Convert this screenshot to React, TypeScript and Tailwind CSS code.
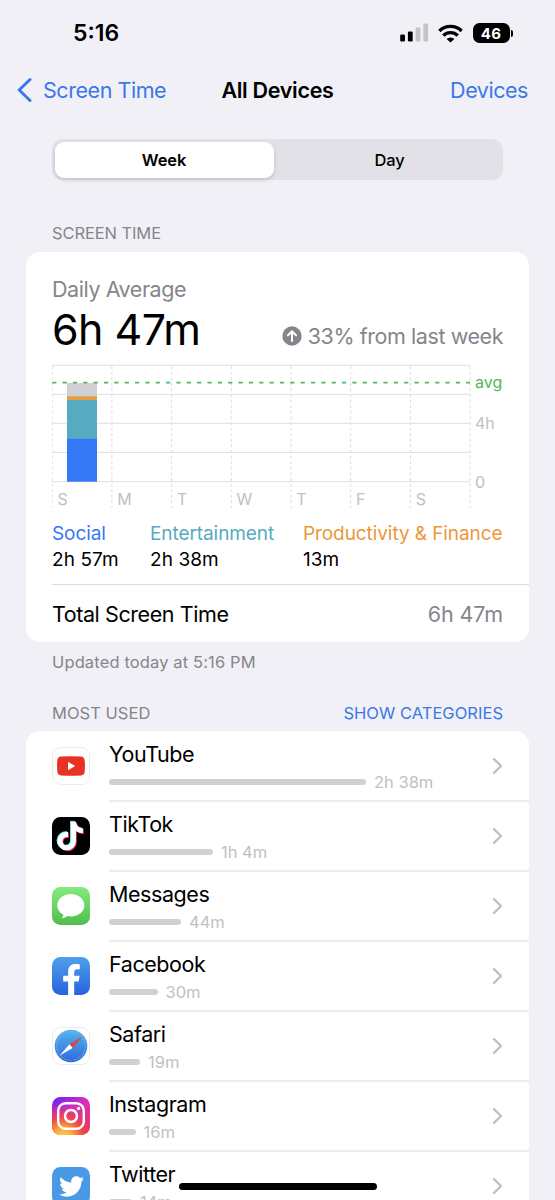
import type { ReactNode } from "react";
import { FaFacebookF, FaTiktok, FaTwitter } from "react-icons/fa";

interface AppUsage {
  name: string;
  time: string;
  barWidth: number;
  icon: ReactNode;
}

const days = ["S", "M", "T", "W", "T", "F", "S"];
const COL = 59.7;

const apps: AppUsage[] = [
  { name: "YouTube", time: "2h 38m", barWidth: 257, icon: <YouTubeIcon /> },
  { name: "TikTok", time: "1h 4m", barWidth: 104, icon: <TikTokIcon /> },
  { name: "Messages", time: "44m", barWidth: 72, icon: <MessagesIcon /> },
  { name: "Facebook", time: "30m", barWidth: 48.5, icon: <FacebookIcon /> },
  { name: "Safari", time: "19m", barWidth: 31, icon: <SafariIcon /> },
  { name: "Instagram", time: "16m", barWidth: 26.5, icon: <InstagramIcon /> },
  { name: "Twitter", time: "14m", barWidth: 23, icon: <TwitterIcon /> },
];

export default function App() {
  return (
    <div className="relative flex h-[1200px] w-[555px] flex-col overflow-hidden bg-[#f1f0f6] font-['Inter',sans-serif] text-black">
      <StatusBar />
      <NavBar />

      {/* Week / Day switch */}
      <div className="mx-[52px] mt-[25px] flex h-[41px] shrink-0 rounded-[11px] bg-[#e2e1e7] p-[2.5px] text-[16.5px] leading-[36px] tracking-[-0.15px]">
        <button className="w-[219px] rounded-[9px] bg-white font-semibold shadow-[0_2px_4px_rgba(0,0,0,0.14)]">Week</button>
        <button className="flex-1 pl-[5px] font-medium">Day</button>
      </div>

      <div className="mt-[43px] h-5 shrink-0 px-[52px] text-[16.5px] leading-5 tracking-[-0.1px] text-[#86858b]">SCREEN TIME</div>
      <SummaryCard />
      <div className="mt-[10px] h-5 shrink-0 px-[52px] text-[16.5px] leading-5 tracking-[0.13px] text-[#86858b]">
        Updated today at 5:16 PM
      </div>

      <div className="mt-[31px] flex h-5 shrink-0 justify-between px-[52px] text-[16.5px] leading-5 tracking-[0.03px] text-[#86858b]">
        <span>MOST USED</span>
        <button className="text-[#3a78ea]">SHOW CATEGORIES</button>
      </div>
      <div className="mx-[26px] mt-[8px] shrink-0 rounded-t-[14px] bg-white pt-px">
        {apps.map((app) => (
          <AppRow key={app.name} app={app} />
        ))}
      </div>

      {/* Home indicator */}
      <div className="absolute bottom-[10.5px] left-[179px] h-[6.5px] w-[198px] rounded-full bg-black" />
    </div>
  );
}

function StatusBar() {
  return (
    <div className="flex h-[66px] shrink-0 items-center pl-[73px] pr-[42px]">
      <span className="flex-1 pt-px text-[23px] font-semibold tracking-[0px]">5:16</span>
      <svg width="30" height="20" viewBox="0 0 30 20" className="mr-[9px]">
        <rect x="0.2" y="11.5" width="4.8" height="7" rx="1.3" />
        <rect x="7.9" y="8.5" width="4.8" height="10" rx="1.3" />
        <rect x="15.6" y="4.5" width="4.8" height="14" rx="1.3" fill="#c4c3c9" />
        <rect x="23.3" y="0.6" width="4.8" height="17.9" rx="1.3" fill="#c4c3c9" />
      </svg>
      <svg width="25" height="19" viewBox="0 0 25 19" className="mr-[9px] -translate-x-px" fill="none" stroke="#000" strokeWidth="3.4">
        <path d="M1.4 7a15.7 15.7 0 0 1 22.2 0" />
        <path d="M5.3 11.6a10.200 10.200 0 0 1 14.400 0" />
        <path d="M12.5 18.4 8.6 15.1a5.4 5.4 0 0 1 7.8 0z" fill="#000" stroke="none" />
      </svg>
      <div className="flex h-[20px] w-[37px] items-center justify-center rounded-[6.5px] bg-black text-[15px] font-bold leading-none tracking-[0.2px] text-white">
        46
      </div>
      <div className="ml-[1.5px] h-[7px] w-[2px] rounded-r-full bg-black" />
    </div>
  );
}

function NavBar() {
  return (
    <div className="grid h-[48px] shrink-0 grid-cols-[1fr_auto_1fr] items-center px-[17px] text-[21.5px] tracking-[-0.45px]">
      <button className="flex items-center gap-[11px] text-[#3a78ea]">
        <svg width="15" height="26" viewBox="0 0 15 26" fill="none" stroke="currentColor" strokeWidth="3" strokeLinecap="round" strokeLinejoin="round">
          <path d="M13 2.5 2.2 13 13 23.5" />
        </svg>
        <span>Screen Time</span>
      </button>
      <h1 className="font-semibold tracking-[-0.3px]">All Devices</h1>
      <button className="pr-[10px] text-right text-[#3a78ea]">Devices</button>
    </div>
  );
}

function SummaryCard() {
  return (
    <div className="mx-[26px] mt-[9px] flex h-[390px] shrink-0 flex-col rounded-[14px] bg-white">
      <div className="px-[26px] pt-[23px]">
        <div className="text-[21.5px] leading-[28px] tracking-[-0.43px] text-[#86858b]">Daily Average</div>
        <div className="flex items-center justify-between">
          <span className="text-[43px] leading-[52px] tracking-[-0.55px]">6h 47m</span>
          <span className="flex items-center gap-[6px] pt-[14px] text-[21.5px] leading-[28px] tracking-[-0.43px] text-[#86858b]">
            <svg width="20" height="20" viewBox="0 0 20 20">
              <circle cx="10" cy="10" r="9.7" fill="#86858b" />
              <path d="M10 15V5.6M5.9 9.4 10 5.3l4.1 4.1" fill="none" stroke="#fff" strokeWidth="2" strokeLinecap="round" strokeLinejoin="round" />
            </svg>
            33% from last week
          </span>
        </div>
      </div>

      <UsageChart />

      {/* Category legend */}
      <div className="mt-[11px] grid grid-cols-[98px_153px_auto] px-[26px] text-[19px] leading-[26px]">
        <Category name="Social" time="2h 57m" color="text-[#3677f6]" />
        <Category name="Entertainment" time="2h 38m" color="text-[#56abc2]" />
        <Category name="Productivity & Finance" time="13m" color="text-[#ec983a]" />
      </div>

      <div className="ml-[26px] mt-auto flex h-[58px] items-center justify-between border-t border-[#dcdce0] pr-[26px] pt-px text-[21.5px] tracking-[-0.42px]">
        <span>Total Screen Time</span>
        <span className="tracking-[-0.1px] text-[#86858b]">6h 47m</span>
      </div>
    </div>
  );
}

function Category({ name, time, color }: { name: string; time: string; color: string }) {
  return (
    <div className="whitespace-nowrap">
      <div className={`tracking-[-0.08px] ${color}`}>{name}</div>
      <div className="tracking-[0.08px]">{time}</div>
    </div>
  );
}

function UsageChart() {
  return (
    <svg width="477" height="147" viewBox="0 0 477 147" className="ml-[26px] mt-[8px]">
      {[2.3, 31.3, 60.3, 89.4, 118.7].map((y) => (
        <path key={y} d={`M0 ${y}H418`} stroke="#dfdfe3" />
      ))}
      {Array.from({ length: 8 }, (_, i) => (
        <path key={i} d={`M${i * COL + 0.2} 3V145`} stroke="#dcdbdf" strokeDasharray="3 2.6" />
      ))}
      <rect x="15" y="20" width="30" height="14" fill="#d0d0d5" />
      <rect x="15" y="33.3" width="30" height="4" fill="#e99c42" />
      <rect x="15" y="37" width="30" height="38.5" fill="#57abc1" />
      <rect x="15" y="75.3" width="30" height="43.4" fill="#3578f6" />
      <path d="M0.2 19.7H418" stroke="#52b760" strokeWidth="1.7" strokeDasharray="4.2 6.15" />
      {days.map((day, i) => (
        <text key={i} x={i * COL + 5.5} y="142" fontSize="16" fill="#c1c0c5">
          {day}
        </text>
      ))}
      <g fontSize="16" fill="#c1c0c5">
        <text x="423" y="25" fill="#52b760">avg</text>
        <text x="423" y="66">4h</text>
        <text x="423" y="124.5">0</text>
      </g>
    </svg>
  );
}

function AppRow({ app }: { app: AppUsage }) {
  return (
    <div className="flex h-[70px] pl-[26px]">
      <div className="mr-[19px] mt-[15px] size-[38px] shrink-0">{app.icon}</div>
      <div className="flex flex-1 items-center border-b-2 border-[#ededf0] pr-[26px]">
        <div className="flex-1 self-start pt-[8px]">
          <div className="text-[21.5px] leading-[28px] tracking-[-0.43px]">{app.name}</div>
          <div className="flex h-[28px] items-center gap-[8px]">
            <div className="h-[6.5px] rounded-full bg-[#d0d0d5]" style={{ width: app.barWidth }} />
            <span className="text-[16.5px] leading-none text-[#c1c0c5]">{app.time}</span>
          </div>
        </div>
        <svg width="11" height="18" viewBox="0 0 11 18" fill="none" stroke="#c1c0c5" strokeWidth="2.4" strokeLinecap="round" strokeLinejoin="round">
          <path d="M2 2.2 9 9l-7 6.8" />
        </svg>
      </div>
    </div>
  );
}

function YouTubeIcon() {
  return (
    <div className="flex size-[38px] items-center justify-center rounded-[8.5px] border border-[#ececee] bg-white">
      <svg width="28" height="20" viewBox="0 0 28 20">
        <path d="M4 .6Q14-.3 24 .6 27.2.9 27.6 4q.7 6 0 12-.4 3.1-3.6 3.4-10 .9-20 0Q.8 19.1.4 16q-.7-6 0-12Q.8.9 4 .6Z" fill="#e83223" />
        <path d="M11 5.8v8.4l7.2-4.2z" fill="#fff" />
      </svg>
    </div>
  );
}

function TikTokIcon() {
  return (
    <svg width="38" height="38" viewBox="0 0 38 38">
      <rect width="38" height="38" rx="8.5" />
      <FaTiktok x="2.8" y="3.7" size={29} color="#6deaea" />
      <FaTiktok x="4.6" y="5.2" size={29} color="#e5365c" />
      <FaTiktok x="3.7" y="4.4" size={29} color="#fff" />
    </svg>
  );
}

function MessagesIcon() {
  return (
    <div className="size-[38px] rounded-[8.5px] bg-gradient-to-b from-[#84ec7e] to-[#50bd4b]">
      <svg width="38" height="38" viewBox="0 0 38 38" fill="#fff">
        <path d="M19 7C11.3 7 5.3 11.9 5.3 18.3c0 4 2.3 7.4 6 9.4-.1 1.4-.7 2.5-1.8 3.5 2.2 0 4.2-.9 5.7-2.2 1.2.3 2.5.4 3.8.4 7.5 0 13.4-4.9 13.4-11.1S26.5 7 19 7Z" />
      </svg>
    </div>
  );
}

function FacebookIcon() {
  return (
    <div className="relative size-[38px] overflow-hidden rounded-[8.5px] bg-gradient-to-b from-[#4fa0ec] to-[#2b62dc]">
      <FaFacebookF className="absolute left-[3.5px] top-[7px] size-[31px] text-white" />
    </div>
  );
}

function SafariIcon() {
  return (
    <div className="flex size-[38px] items-center justify-center rounded-[8.5px] border border-[#ececee] bg-white">
      <svg width="34" height="34" viewBox="0 0 34 34">
        <defs>
          <linearGradient id="safari" x1="0" y1="0" x2="0" y2="1">
            <stop offset="0" stopColor="#54b4ee" />
            <stop offset="1" stopColor="#3068d8" />
          </linearGradient>
        </defs>
        <circle cx="17" cy="17" r="16.3" fill="url(#safari)" />
        <circle cx="17" cy="17" r="14.4" fill="none" stroke="#8fc0f0" strokeWidth="1.4" strokeDasharray=".5 1.3" />
        <path d="M28.5 7.5 15.4 15.3l3.2 3.7z" fill="#e2453c" />
        <path d="M5.5 26.7 15.4 15.3l3.2 3.7z" fill="#fff" />
      </svg>
    </div>
  );
}

function InstagramIcon() {
  return (
    <svg width="38" height="38" viewBox="0 0 38 38">
      <defs>
        <linearGradient id="ig-base" x1="0.1" y1="0" x2="0.8" y2="1">
          <stop offset="0" stopColor="#6a20f5" />
          <stop offset="0.4" stopColor="#d52cc4" />
          <stop offset="1" stopColor="#ea3a55" />
        </linearGradient>
        <radialGradient id="ig-glow" cx="0.3" cy="1.05" r="0.9">
          <stop offset="0" stopColor="#fcd84a" />
          <stop offset="0.3" stopColor="#f9a13a" />
          <stop offset="0.6" stopColor="#f0443f" stopOpacity="0.85" />
          <stop offset="1" stopColor="#e0309a" stopOpacity="0" />
        </radialGradient>
      </defs>
      <rect width="38" height="38" rx="8.5" fill="url(#ig-base)" />
      <rect width="38" height="38" rx="8.5" fill="url(#ig-glow)" />
      <rect x="6.2" y="6.2" width="25.6" height="25.6" rx="7.5" fill="none" stroke="#fff" strokeWidth="2.4" />
      <circle cx="19" cy="19" r="6" fill="none" stroke="#fff" strokeWidth="2.5" />
      <circle cx="26.6" cy="11.5" r="1.7" fill="#fff" />
    </svg>
  );
}

function TwitterIcon() {
  return (
    <div className="flex size-[38px] items-center justify-center rounded-[8.5px] bg-[#4a99e4]">
      <FaTwitter className="size-[25px] text-white" />
    </div>
  );
}
